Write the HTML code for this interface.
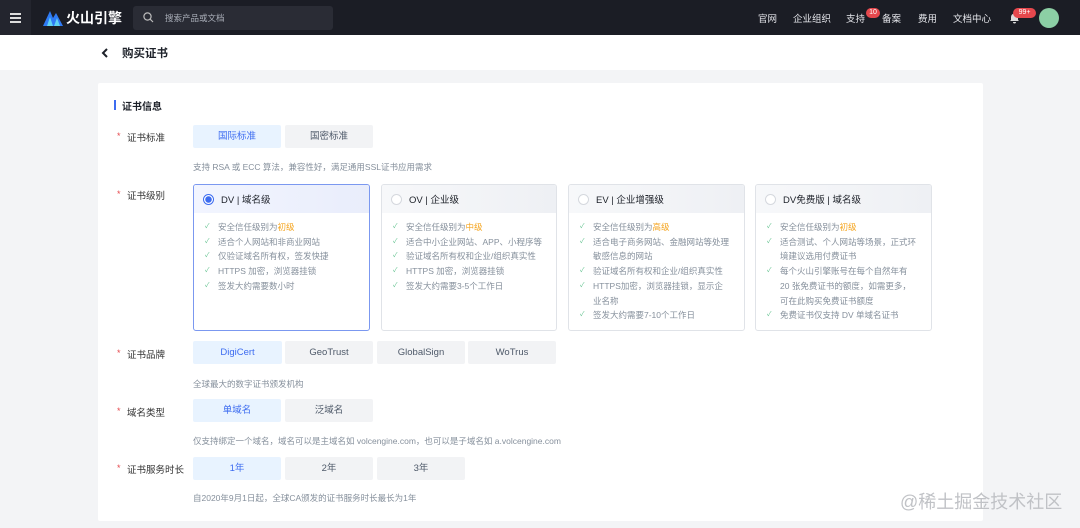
<!DOCTYPE html>
<html><head><meta charset="utf-8"><style>
*{box-sizing:border-box;margin:0;padding:0}
body{width:1080px;height:528px;overflow:hidden;background:#f3f4f6;font-family:"Liberation Sans","Noto Sans CJK SC",sans-serif;position:relative;color:#1d2129}
.a{position:absolute}
.nav{left:0;top:0;width:1080px;height:35px;background:#1b1d25}
.nt{color:#e5e6eb;font-size:9.5px;top:11px}
.lbl{font-size:9.5px;color:#333;left:127px}
.star{left:117px;color:#e5484d;font-size:9px}
.btn{height:23px;background:#f2f3f5;border-radius:2px;font-size:9.5px;color:#4e5969;text-align:center;line-height:23px}
.btn.on{background:#e8f3ff;color:#3d6cf0}
.hint{font-size:8.5px;color:#86909c;left:193px}
.card{border:1px solid #e0e3e8;border-radius:3px;top:184px;height:147px;background:#fff;overflow:hidden}
.card.on{border-color:#7b98f0}
.ch{height:28px;background:linear-gradient(90deg,#f7f8fa,#eef0f4);display:flex;align-items:center;padding-left:9px;font-size:9.5px;color:#1d2129}
.card.on .ch{background:linear-gradient(90deg,#f2f5ff,#e9edfb)}
.rd{width:11px;height:11px;border-radius:50%;border:1px solid #d5d8de;background:#fff;margin-right:7px}
.card.on .rd{border-color:#3d6cf0;background:radial-gradient(#3d6cf0 3px,#fff 3.5px)}
ul{list-style:none;padding:7px 12px 0 10px;font-size:8.5px;color:#86909c;line-height:14.7px}
li{padding-left:14px;position:relative}
li:before{content:"✓";position:absolute;left:1px;top:0;color:#5cc08a;font-size:6.5px}
.o{color:#f5a623}
</style></head><body>
<div class="a nav"></div>
<div class="a" style="left:0;top:0;width:31px;height:35px;background:#23252e"></div>
<div class="a" style="left:10px;top:13px;width:11px;height:1.5px;background:#ddd;box-shadow:0 4px 0 #ddd,0 8px 0 #ddd"></div>
<svg class="a" style="left:43px;top:9px" width="20" height="17" viewBox="0 0 20 17"><path d="M0 17L7 2L10 9L13 4L20 17Z" fill="#2f7bf5"/><path d="M4 17L7 8L10 17Z" fill="#5fd3f3"/><path d="M11 17L14 9L17 17Z" fill="#5fd3f3"/></svg>
<div class="a" style="left:66px;top:8px;color:#fff;font-size:14px;font-weight:bold">火山引擎</div>
<div class="a" style="left:133px;top:6px;width:200px;height:24px;background:#2a2c35;border-radius:3px"></div>
<svg class="a" style="left:143px;top:12px" width="11" height="11" viewBox="0 0 11 11"><circle cx="4.5" cy="4.5" r="3.6" fill="none" stroke="#bbb" stroke-width="1.2"/><path d="M7.2 7.2L10 10" stroke="#bbb" stroke-width="1.2"/></svg>
<div class="a" style="left:165px;top:12px;font-size:8.5px;color:#a9aeb8">搜索产品或文档</div>
<div class="a nt" style="left:758px">官网</div>
<div class="a nt" style="left:793px">企业组织</div>
<div class="a nt" style="left:846px">支持</div>
<div class="a" style="left:866px;top:8px;width:14px;height:10px;border-radius:5px;background:#e5484d;color:#fff;font-size:7px;text-align:center;line-height:10px">10</div>
<div class="a nt" style="left:882px">备案</div>
<div class="a nt" style="left:918px">费用</div>
<div class="a nt" style="left:953px">文档中心</div>
<svg class="a" style="left:1009px;top:12px" width="11" height="12" viewBox="0 0 11 12"><path d="M1 9L2 8V5a3.5 3.5 0 017 0v3l1 1Z M4 10h3a1.5 1.5 0 01-3 0" fill="#ddd"/></svg>
<div class="a" style="left:1013px;top:8px;width:23px;height:10px;border-radius:5px;background:#e5484d;color:#fff;font-size:7px;text-align:center;line-height:10px">99+</div>
<div class="a" style="left:1039px;top:8px;width:20px;height:20px;border-radius:50%;background:#8ccfa5"></div>
<div class="a" style="left:0;top:35px;width:1080px;height:35px;background:#fff"></div>
<svg class="a" style="left:101px;top:48px" width="8" height="10" viewBox="0 0 8 10"><path d="M6 1L2 5L6 9" fill="none" stroke="#1d2129" stroke-width="2"/></svg>
<div class="a" style="left:122px;top:45px;font-size:11.5px;font-weight:bold">购买证书</div>
<div class="a" style="left:98px;top:83px;width:885px;height:438px;background:#fff;border-radius:2px"></div>
<div class="a" style="left:114px;top:100px;width:2px;height:10px;background:#3d6cf0"></div>
<div class="a" style="left:122px;top:98px;font-size:10px;font-weight:bold">证书信息</div>

<div class="a star" style="top:131px">*</div><div class="a lbl" style="top:130px">证书标准</div>
<div class="a btn on" style="left:193px;top:125px;width:88px">国际标准</div>
<div class="a btn" style="left:285px;top:125px;width:88px">国密标准</div>
<div class="a hint" style="top:161px">支持 RSA 或 ECC 算法，兼容性好，满足通用SSL证书应用需求</div>

<div class="a star" style="top:189px">*</div><div class="a lbl" style="top:188px">证书级别</div>
<div class="a card on" style="left:193px;width:177px"><div class="ch"><span class="rd"></span>DV | 域名级</div><ul><li>安全信任级别为<span class="o">初级</span></li><li>适合个人网站和非商业网站</li><li>仅验证域名所有权，签发快捷</li><li>HTTPS 加密，浏览器挂锁</li><li>签发大约需要数小时</li></ul></div>
<div class="a card" style="left:381px;width:176px"><div class="ch"><span class="rd"></span>OV | 企业级</div><ul style="padding-right:4px"><li>安全信任级别为<span class="o">中级</span></li><li>适合中小企业网站、APP、小程序等</li><li>验证域名所有权和企业/组织真实性</li><li>HTTPS 加密，浏览器挂锁</li><li>签发大约需要3-5个工作日</li></ul></div>
<div class="a card" style="left:568px;width:177px"><div class="ch"><span class="rd"></span>EV | 企业增强级</div><ul style="padding-right:14px"><li>安全信任级别为<span class="o">高级</span></li><li>适合电子商务网站、金融网站等处理敏感信息的网站</li><li>验证域名所有权和企业/组织真实性</li><li>HTTPS加密，浏览器挂锁，显示企业名称</li><li>签发大约需要7-10个工作日</li></ul></div>
<div class="a card" style="left:755px;width:177px"><div class="ch"><span class="rd"></span>DV免费版 | 域名级</div><ul style="padding-right:14px"><li>安全信任级别为<span class="o">初级</span></li><li>适合测试、个人网站等场景，正式环境建议选用付费证书</li><li>每个火山引擎账号在每个自然年有 20 张免费证书的额度，如需更多，可在此购买免费证书额度</li><li>免费证书仅支持 DV 单域名证书</li></ul></div>

<div class="a star" style="top:348px">*</div><div class="a lbl" style="top:347px">证书品牌</div>
<div class="a btn on" style="left:193px;top:341px;width:89px">DigiCert</div>
<div class="a btn" style="left:285px;top:341px;width:88px">GeoTrust</div>
<div class="a btn" style="left:377px;top:341px;width:88px">GlobalSign</div>
<div class="a btn" style="left:468px;top:341px;width:88px">WoTrus</div>
<div class="a hint" style="top:378px">全球最大的数字证书颁发机构</div>

<div class="a star" style="top:406px">*</div><div class="a lbl" style="top:405px">域名类型</div>
<div class="a btn on" style="left:193px;top:399px;width:88px">单域名</div>
<div class="a btn" style="left:285px;top:399px;width:88px">泛域名</div>
<div class="a hint" style="top:435px">仅支持绑定一个域名，域名可以是主域名如 volcengine.com，也可以是子域名如 a.volcengine.com</div>

<div class="a star" style="top:463px">*</div><div class="a lbl" style="top:462px">证书服务时长</div>
<div class="a btn on" style="left:193px;top:457px;width:88px">1年</div>
<div class="a btn" style="left:285px;top:457px;width:88px">2年</div>
<div class="a btn" style="left:377px;top:457px;width:88px">3年</div>
<div class="a hint" style="top:492px">自2020年9月1日起，全球CA颁发的证书服务时长最长为1年</div>

<div class="a" style="left:900px;top:488px;font-size:18px;color:#c0c2c6;white-space:nowrap">@稀土掘金技术社区</div>
</body></html>
